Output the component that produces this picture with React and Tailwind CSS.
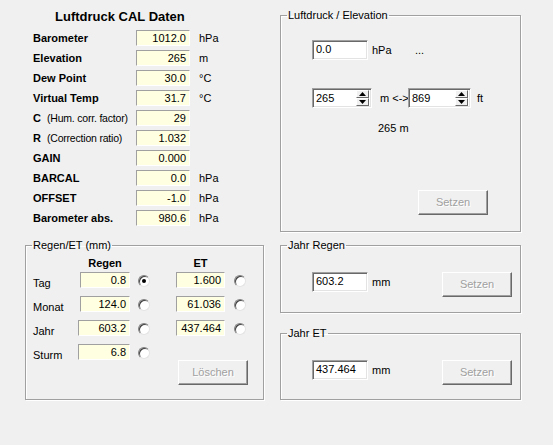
import React from 'react';

const calRows = [
  { label: 'Barometer', value: '1012.0', unit: 'hPa' },
  { label: 'Elevation', value: '265', unit: 'm' },
  { label: 'Dew Point', value: '30.0', unit: '°C' },
  { label: 'Virtual Temp', value: '31.7', unit: '°C' },
  { label: 'C', note: '(Hum. corr. factor)', value: '29', unit: '' },
  { label: 'R', note: '(Correction ratio)', value: '1.032', unit: '' },
  { label: 'GAIN', value: '0.000', unit: '' },
  { label: 'BARCAL', value: '0.0', unit: 'hPa' },
  { label: 'OFFSET', value: '-1.0', unit: 'hPa' },
  { label: 'Barometer abs.', value: '980.6', unit: 'hPa' },
];

const regenRows = [
  { label: 'Tag', value: '0.8', checked: true, wide: false },
  { label: 'Monat', value: '124.0', checked: false, wide: false },
  { label: 'Jahr', value: '603.2', checked: false, wide: true },
  { label: 'Sturm', value: '6.8', checked: false, wide: true },
];

const etRows = [
  { value: '1.600', checked: false },
  { value: '61.036', checked: false },
  { value: '437.464', checked: false },
];

function YellowField({ value, wide }) {
  return (
    <div
      className={
        (wide ? 'w-[52px] -ml-[2px] ' : 'w-[50px] ') +
        'h-[16px] bg-[#ffffe1] border border-t-[#a0a0a0] border-l-[#a0a0a0] border-r-white border-b-white text-right pr-[3px] leading-[14px]'
      }
    >
      {value}
    </div>
  );
}

function WhiteField({ value, width = 'w-[56px]' }) {
  return (
    <div
      className={
        width +
        ' h-[20px] bg-white border border-t-[#a0a0a0] border-l-[#a0a0a0] border-r-white border-b-white shadow-[inset_1px_1px_0_#696969,inset_-1px_-1px_0_#e3e3e3] pl-[3px] leading-[17px]'
      }
    >
      {value}
    </div>
  );
}

function SpinField({ value, width }) {
  return (
    <div
      className={
        width +
        ' h-[20px] bg-white border border-t-[#a0a0a0] border-l-[#a0a0a0] border-r-white border-b-white shadow-[inset_1px_1px_0_#696969,inset_-1px_-1px_0_#e3e3e3] pl-[3px] pr-[2px] py-[1px] flex items-stretch leading-[16px]'
      }
    >
      <span className="flex-1">{value}</span>
      <div className="w-[13px] flex flex-col">
        <div className="h-[8px] bg-[#f0f0f0] border border-t-white border-l-white border-r-[#696969] border-b-[#696969] flex items-center justify-center">
          <svg width="7" height="4" viewBox="0 0 7 4">
            <path d="M3.5 0 L7 4 L0 4 Z" fill="#000" />
          </svg>
        </div>
        <div className="h-[8px] bg-[#f0f0f0] border border-t-white border-l-white border-r-[#696969] border-b-[#696969] flex items-center justify-center">
          <svg width="7" height="4" viewBox="0 0 7 4">
            <path d="M0 0 L7 0 L3.5 4 Z" fill="#000" />
          </svg>
        </div>
      </div>
    </div>
  );
}

function Radio({ checked }) {
  return (
    <span className="w-[12px] h-[12px] rounded-full bg-white border border-t-[#808080] border-l-[#808080] border-r-[#e3e3e3] border-b-[#e3e3e3] shadow-[inset_1px_1px_0_#404040] flex items-center justify-center">
      {checked ? <span className="w-[4px] h-[4px] rounded-full bg-black" /> : null}
    </span>
  );
}

function WinButton({ children, className = '' }) {
  return (
    <div
      className={
        'w-[70px] h-[25px] bg-[#f0f0f0] border border-t-white border-l-white border-r-[#696969] border-b-[#696969] shadow-[inset_-1px_-1px_0_#a0a0a0] flex items-center justify-center text-[#a0a0a0] [text-shadow:1px_1px_0_#fff] ' +
        className
      }
    >
      {children}
    </div>
  );
}

function Group({ title, className, children }) {
  return (
    <fieldset
      className={
        'border border-[#a0a0a0] shadow-[1px_1px_0_#fff,inset_1px_1px_0_#fff] ' + className
      }
    >
      <legend className="ml-[6px] px-[1px] leading-[13px]">{title}</legend>
      {children}
    </fieldset>
  );
}

function CalDaten() {
  return (
    <div className="w-[280px] pl-[25px] flex flex-col">
      <div className="pt-[9px] pl-[30px] text-[13px] font-bold leading-[15px]">Luftdruck CAL Daten</div>
      <div className="mt-[4px] flex flex-col">
        {calRows.map((r) => (
          <div key={r.label} className="h-[20px] pl-[8px] flex items-center">
            <div className="w-[103px] whitespace-nowrap">
              <span className="font-bold">{r.label}</span>
              {r.note ? <span className="ml-[6px] text-[10.5px] tracking-[-0.2px]">{r.note}</span> : null}
            </div>
            <div className="w-[54px] h-[16px] bg-[#ffffe1] border border-t-[#a0a0a0] border-l-[#a0a0a0] border-r-white border-b-white text-right pr-[3px] leading-[14px]">
              {r.value}
            </div>
            <span className="ml-[9px]">{r.unit}</span>
          </div>
        ))}
      </div>

      <Group title="Regen/ET (mm)" className="mt-[11px] w-[239px] h-[161px]">
        <div className="flex">
          <div className="w-[150px] pl-[7px] flex flex-col">
            <div className="mt-[4px] h-[14px] pl-[47px]">
              <div className="w-[50px] text-center font-bold leading-[14px]">Regen</div>
            </div>
            <div className="mt-[2px] flex flex-col">
              {regenRows.map((r) => (
                <div key={r.label} className="h-[24px] flex items-start">
                  <div className="w-[47px] pt-[5px] leading-[13px]">{r.label}</div>
                  <YellowField value={r.value} wide={r.wide} />
                  <div className="ml-[8px] mt-[3px]">
                    <Radio checked={r.checked} />
                  </div>
                </div>
              ))}
            </div>
          </div>
          <div className="flex flex-col">
            <div className="mt-[4px] h-[14px]">
              <div className="w-[49px] text-center font-bold leading-[14px]">ET</div>
            </div>
            <div className="mt-[2px] flex flex-col">
              {etRows.map((r) => (
                <div key={r.value} className="h-[24px] flex items-start">
                  <div className="w-[49px] h-[16px] bg-[#ffffe1] border border-t-[#a0a0a0] border-l-[#a0a0a0] border-r-white border-b-white text-right pr-[3px] leading-[14px]">
                    {r.value}
                  </div>
                  <div className="ml-[9px] mt-[3px]">
                    <Radio checked={r.checked} />
                  </div>
                </div>
              ))}
            </div>
            <WinButton className="mt-[16px] ml-[2px]">Löschen</WinButton>
          </div>
        </div>
      </Group>
    </div>
  );
}

function RightPanel() {
  return (
    <div className="w-[241px] flex flex-col">
      <Group title="Luftdruck / Elevation" className="mt-[9px] h-[223px]">
        <div className="mt-[18px] pl-[31px] flex items-center">
          <WhiteField value="0.0" />
          <span className="ml-[4px] w-[43px]">hPa</span>
          <span>...</span>
        </div>
        <div className="mt-[28px] pl-[31px] flex items-center">
          <SpinField value="265" width="w-[60px]" />
          <span className="ml-[8px] w-[28px] whitespace-nowrap">m &lt;-&gt;</span>
          <SpinField value="869" width="w-[63px]" />
          <span className="ml-[6px]">ft</span>
        </div>
        <div className="mt-[14px] pl-[97px] leading-[13px]">265 m</div>
        <WinButton className="mt-[55px] ml-[137px]">Setzen</WinButton>
      </Group>

      <Group title="Jahr Regen" className="mt-[7px] h-[74px]">
        <div className="mt-[20px] pl-[31px] flex items-start">
          <WhiteField value="603.2" />
          <span className="ml-[4px] w-[70px] leading-[20px]">mm</span>
          <WinButton>Setzen</WinButton>
        </div>
      </Group>

      <Group title="Jahr ET" className="mt-[14px] h-[73px]">
        <div className="mt-[20px] pl-[31px] flex items-start">
          <WhiteField value="437.464" />
          <span className="ml-[4px] w-[70px] leading-[20px]">mm</span>
          <WinButton>Setzen</WinButton>
        </div>
      </Group>
    </div>
  );
}

export default function App() {
  return (
    <div className="w-[553px] h-[445px] bg-[#f0f0f0] flex text-[11px] text-black font-['Liberation_Sans',Arial,sans-serif]">
      <CalDaten />
      <RightPanel />
    </div>
  );
}
